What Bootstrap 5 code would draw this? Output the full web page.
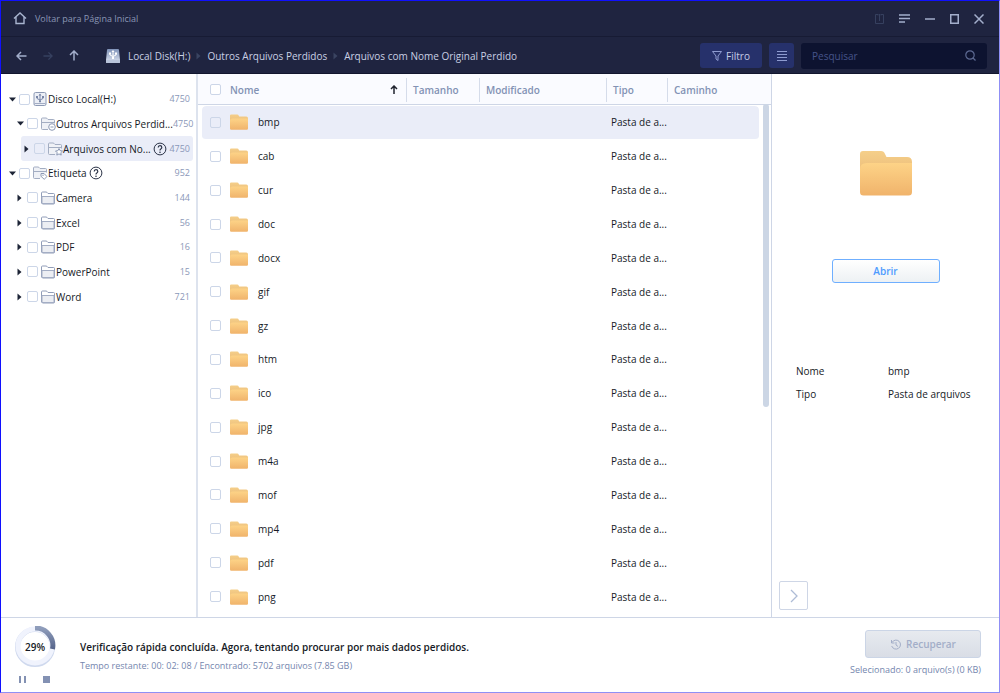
<!DOCTYPE html>
<html lang="pt">
<head>
<meta charset="utf-8">
<meta name="viewport" content="width=device-width, initial-scale=1">
<title>Recuperação de dados</title>
<link href="https://cdn.jsdelivr.net/npm/bootstrap@5.3.0/dist/css/bootstrap.min.css" rel="stylesheet">
<style>
  :root { --navy:#1f2440; --line:#ced6e6; --muted:#8b98b8; --ink:#161a26; --sel:#eaedf8; }
  body { font-family:"Open Sans","Noto Sans",sans-serif; font-size:10px; line-height:16px; color:var(--ink);
    border:1px solid #1010ff; border-right-color:#8f8ff5; border-bottom-color:#8f8ff5; background:#fff; }
  svg { display:block; flex:none; }
  button { line-height:16px; }
  .text-faint { color:var(--muted); }

  /* dark header */
  .titlebar, .toolbar { background:var(--navy); }
  .titlebar { height:36px; padding:0 15px 0 12px; border-bottom:1px solid #171b34; color:#8f9bbb; }
  .titlebar a { color:#8a96b5; font-size:9px; }
  .window-tools { gap:15px; }
  .toolbar { height:37px; padding:1px 12px 0 15px; border-bottom:1px solid #12162e; }
  .plain { background:none; border:0; padding:0; color:#a3aecb; }
  .plain:disabled { color:#36405f; }
  .crumbs { margin-left:23px; }
  .crumbs a { color:#c9d0e4; }
  .crumbs .sep { color:#3a4461; margin:0 6px; }
  .tools { gap:7px; }
  .tool-btn { background:#26316b; border:0; border-radius:3px; height:25px; color:#c6cee6; padding:0; }
  .tool-btn svg { color:#8e9bd0; }
  .filter-btn { width:62px; font-size:10px; }
  .view-btn { width:25px; }
  .search-box { width:186px; height:26px; background:#0d1330; border-radius:3px; padding:0 11px; color:#5d6a92; }
  .search-box input { background:none; border:0; outline:0; width:100%; min-width:0; padding:0; color:#c3cbe0; }
  .search-box input::placeholder { color:#46538a; opacity:1; }

  /* checkboxes */
  .tick { appearance:none; flex:none; width:11px; height:11px; margin:0; border:1px solid #ccd6e8; border-radius:2px; background:#fff; display:block; }
  .picked .tick { background:transparent; }

  /* tree */
  .tree-pane { width:197px; border-right:2px solid #dde3ee; padding:13px 3px 0 7px; }
  .tree { display:grid; grid-template-columns:minmax(0,1fr); grid-auto-rows:1fr; height:222px; }
  .node { border-radius:3px; padding:0 3px 0 1px; }
  .node.picked { background:var(--sel); }
  .node .twist { width:10px; color:#1d2436; }
  .lvl-1 { margin-left:8px; }
  .lvl-2 { margin-left:13px; padding-left:3px; }
  .node .tick { margin-right:3px; }
  .node .count { font-size:9px; }
  .help { color:#2b3347; margin-left:2px; }

  /* file table */
  .list-pane { min-width:0; background:linear-gradient(#fafbff 30px,var(--line) 30px 31px,#fff 31px); border-right:1px solid var(--line); }
  .files { width:100%; height:100%; table-layout:fixed; border-collapse:separate; border-spacing:0; }
  .files th { height:32px; padding:0 0 1px; font-weight:600; color:#8292b4; vertical-align:middle; }
  .files th > div { height:24px; padding-left:6px; }
  .files th + th > div { border-left:1px solid #d5dcea; }
  .files td { padding:0 0 0 5px; vertical-align:middle; border-bottom:1px solid transparent; background-clip:padding-box; white-space:nowrap; }
  .files td:first-child, .files th:first-child { padding-left:8px; }
  .files th:first-child > div { padding-left:0; }
  .files .tick { margin-right:9px; }
  .files label { margin-left:10px; }
  .files .picked td { background-color:var(--sel); }
  .files .picked td:first-child { border-radius:4px 0 0 4px; }
  .files .picked td:last-child { border-radius:0 4px 4px 0; }
  .list-body { min-width:0; padding:0 0 3px 4px; }
  .rail { width:12px; padding:30px 0 0 4px; }
  .thumb { width:6px; background:#ccd6e5; border-radius:3px; }

  /* preview */
  .preview { width:227px; padding:76px 0 7px; }
  .open-btn { width:108px; height:24px; margin-top:63px; padding:0; background:linear-gradient(#fff,#edf1f4); border:1px solid #6fafff; border-radius:3px; color:#4d9bff; font-weight:600; }
  .facts { display:grid; grid-template-columns:92px 1fr; row-gap:7px; margin:80px 0 0 24px; }
  .next-btn { width:29px; height:29px; margin-left:7px; background:#fff; border:1px solid var(--line); border-radius:2px; color:#aebcd6; padding:0; }

  /* status bar */
  .status { height:75px; border-top:1px solid var(--line); padding:0 18px 0 13px; }
  .gauge { width:42px; }
  .gauge strong { font-weight:600; }
  .status-text { margin-left:24px; padding-top:21px; }
  .status-text p { font-weight:600; margin:0 0 3px; }
  .note { font-size:9px; color:#7486ae; }
  .recover { width:116px; height:28px; padding:0; border:1px solid #cbd5e6; border-radius:3px; background:linear-gradient(#e7eaef,#d9dde6); color:#a3aec8; font-weight:600; }
</style>
</head>
<body class="d-flex flex-column min-vh-100">

<!-- shared symbols -->
<svg width="0" height="0" class="position-absolute" aria-hidden="true">
  <defs>
    <linearGradient id="gFront" x1="0" y1="0" x2="0" y2="1"><stop offset="0" stop-color="#fdd387"/><stop offset="1" stop-color="#f0b36b"/></linearGradient>
    <linearGradient id="gBack" x1="0" y1="0" x2="0" y2="1"><stop offset="0" stop-color="#f5cf8a"/><stop offset="1" stop-color="#e9b673"/></linearGradient>
    <linearGradient id="gDisk" x1="0" y1="0" x2="0" y2="1"><stop offset="0" stop-color="#7f92b8"/><stop offset="1" stop-color="#dfe5f1"/></linearGradient>
    <linearGradient id="gArc" x1="0" y1="0" x2="0" y2="1"><stop offset="0" stop-color="#8f9dbb"/><stop offset="1" stop-color="#56648a"/></linearGradient>
    <symbol id="folder" viewBox="0 0 52 46">
      <path fill="url(#gBack)" d="M0 4a3 3 0 0 1 3-3h18q3 0 4 3l1.500 3H47q5 0 5 5v20H0z"/>
      <path fill="url(#gFront)" d="M0 19q0-6 7-6h45v29a3.500 3.500 0 0 1-3.500 3.500h-45A3.500 3.500 0 0 1 0 42z"/>
    </symbol>
    <symbol id="dir" viewBox="0 0 15 14">
      <path fill="#fff" stroke="#919db8" d="M.5 12V2q0-1 1-1h3.500q1 0 1.500 1l.5.500h5.500q1 0 1 1V12q0 1-1 1h-10.500q-1 0-1-1z"/>
      <path fill="#eceef3" stroke="#a3adc4" d="M1 12.500v-7h12v7z"/>
    </symbol>
    <symbol id="dirBadge" viewBox="0 0 15 14">
      <path fill="#eff1f6" stroke="#a3adc2" d="M7 12.500H1.500q-1 0-1-1V2q0-1 1-1H5q1 0 1.500 1l.5.500h5.500q1 0 1 1v3M1 5.500h12"/>
    </symbol>
    <symbol id="fork" viewBox="0 0 9 9">
      <path d="M4.500 1v7M1.500 3.500v1.500l3 1.500 3-1.500V3.500" fill="none" stroke="currentColor"/>
      <path d="M3 2 4.500 0 6 2zM.5 2.500h2v2h-2zM6.500 2.500h2v2h-2zM3.500 7h2v2h-2z" fill="currentColor"/>
    </symbol>
    <symbol id="drive" viewBox="0 0 14 14">
      <rect x=".5" y=".5" width="12" height="13" rx="1.500" fill="#eceff6" stroke="#8c99b4"/>
      <path d="M1 11.500h11" stroke="#a3adc4"/>
      <use href="#fork" x="2" y="1.500" width="9" height="9" color="#7886a8"/>
    </symbol>
    <symbol id="down" viewBox="0 0 7 5"><path fill="currentColor" d="M0 .5h7L3.500 4.500z"/></symbol>
    <symbol id="right" viewBox="0 0 5 8"><path fill="currentColor" d="M.5.500v7L4.500 4z"/></symbol>
    <symbol id="help" viewBox="0 0 14 14">
      <circle cx="7" cy="7" r="5.900" fill="none" stroke="currentColor"/>
      <path d="M5.200 5.600q0-1.900 1.800-1.900t1.800 1.700q0 .9-1 1.500T7 8.500" fill="none" stroke="currentColor" stroke-width="1.200"/><circle cx="7" cy="10.200" r=".8" fill="currentColor"/>
    </symbol>
  </defs>
</svg>

<header>
  <div class="titlebar d-flex align-items-center">
    <a href="#" class="d-flex align-items-center text-decoration-none me-auto">
      <svg class="me-2" width="14" height="13" viewBox="0 0 14 13" fill="none" stroke="#a9b5d0" stroke-width="1.400"><path d="M1 6.500 7 1l6 5.500M3 5v6.500h8V5"/></svg>
      Voltar para Página Inicial</a>
    <div class="window-tools d-flex align-items-center">
      <button class="plain" disabled aria-label="Exportar"><svg width="9" height="11" viewBox="0 0 9 11" fill="none" stroke="currentColor"><path d="M3 1.500H.5v9h8v-9H6M4.500 8V1M3 2.500 4.500 1 6 2.500"/></svg></button>
      <button class="plain" aria-label="Menu"><svg width="11" height="9" viewBox="0 0 11 9" stroke="currentColor" stroke-width="1.500"><path d="M0 1h11M0 4.500h11M0 8h6"/></svg></button>
      <button class="plain" aria-label="Minimizar"><svg width="10" height="10" viewBox="0 0 10 10" stroke="currentColor" stroke-width="1.500"><path d="M0 5h10"/></svg></button>
      <button class="plain" aria-label="Maximizar"><svg width="9" height="10" viewBox="0 0 9 10" fill="none" stroke="currentColor" stroke-width="1.500"><path d="M.75.750h7.500v8.500H.75z"/></svg></button>
      <button class="plain" aria-label="Fechar"><svg width="10" height="10" viewBox="0 0 10 10" stroke="currentColor" stroke-width="1.500"><path d="m.5.500 9 9M9.500.500l-9 9"/></svg></button>
    </div>
  </div>
  <div class="toolbar d-flex align-items-center">
    <div class="d-flex align-items-center gap-3">
      <button class="plain" aria-label="Voltar"><svg width="11" height="10" viewBox="0 0 11 10" fill="none" stroke="currentColor" stroke-width="1.500"><path d="M10.500 5H1M5 1 1 5l4 4"/></svg></button>
      <button class="plain" disabled aria-label="Avançar"><svg width="10" height="10" viewBox="0 0 11 10" fill="none" stroke="currentColor" stroke-width="1.500"><path d="M.5 5H10M6 1l4 4-4 4"/></svg></button>
      <button class="plain" aria-label="Acima"><svg width="10" height="11" viewBox="0 0 10 11" fill="none" stroke="currentColor" stroke-width="1.500"><path d="M5 10.500V1M1 5l4-4 4 4"/></svg></button>
    </div>
    <nav class="crumbs d-flex align-items-center me-auto text-nowrap" aria-label="Local">
      <a href="#" class="d-flex align-items-center text-decoration-none ps-1"><svg class="me-2" width="14" height="14" viewBox="0 0 14 14"><path fill="url(#gDisk)" d="M2 0h10q1 0 1 1l1 10v2q0 1-1 1H1q-1 0-1-1v-2L1 1q0-1 1-1z"/><path fill="#b9c4da" d="M0 11h14v2q0 1-1 1H1q-1 0-1-1z"/><use href="#fork" x="2.500" y="1" width="9" height="9" color="#fff"/></svg><span>Local Disk(H:)</span></a>
      <svg class="sep" width="5" height="8"><use href="#right"/></svg>
      <a href="#" class="text-decoration-none">Outros Arquivos Perdidos</a>
      <svg class="sep" width="5" height="8"><use href="#right"/></svg>
      <a href="#" class="text-decoration-none">Arquivos com Nome Original Perdido</a>
    </nav>
    <div class="tools d-flex align-items-center">
      <button class="tool-btn filter-btn d-flex align-items-center justify-content-center gap-1"><svg width="10" height="10" viewBox="0 0 10 10" fill="none" stroke="currentColor"><path d="M.5.500h9L6 5v4.500L4 8V5z"/></svg><span>Filtro</span></button>
      <button class="tool-btn view-btn d-flex align-items-center justify-content-center" aria-label="Lista"><svg width="10" height="10" viewBox="0 0 10 10" stroke="currentColor"><path d="M0 .5h10M0 3.500h10M0 6.500h10M0 9.500h10"/></svg></button>
      <div class="search-box d-flex align-items-center gap-2">
        <input type="text" placeholder="Pesquisar" aria-label="Pesquisar">
        <svg width="11" height="11" viewBox="0 0 11 11" fill="none" stroke="currentColor" stroke-width="1.200"><circle cx="5" cy="5" r="4.200"/><path d="m8 8 2.500 2.500"/></svg>
      </div>
    </div>
  </div>
</header>

<main class="d-flex flex-grow-1">
  <aside class="tree-pane flex-shrink-0">
    <div class="tree" id="tree"></div>
  </aside>

  <section class="list-pane d-flex flex-grow-1">
    <div class="list-body flex-grow-1">
      <table class="files">
        <colgroup><col style="width:204px"><col style="width:73px"><col style="width:127px"><col style="width:61px"><col></colgroup>
        <thead><tr>
          <th><div class="d-flex align-items-center"><input class="tick" type="checkbox" aria-label="Selecionar tudo"><span class="me-auto">Nome</span><svg class="me-2" width="8" height="9" viewBox="0 0 8 9" fill="none" stroke="#20242f" stroke-width="1.500"><path d="M4 9V1M1 4l3-3 3 3"/></svg></div></th>
          <th><div class="d-flex align-items-center">Tamanho</div></th>
          <th><div class="d-flex align-items-center">Modificado</div></th>
          <th><div class="d-flex align-items-center">Tipo</div></th>
          <th><div class="d-flex align-items-center">Caminho</div></th>
        </tr></thead>
        <tbody id="rows"></tbody>
      </table>
    </div>
    <div class="rail flex-shrink-0"><div class="thumb" style="height:59%"></div></div>
  </section>

  <aside class="preview flex-shrink-0 d-flex flex-column">
    <svg class="align-self-center" width="52" height="46"><use href="#folder"/></svg>
    <button class="open-btn align-self-center">Abrir</button>
    <div class="facts"><span>Nome</span><span>bmp</span><span>Tipo</span><span>Pasta de arquivos</span></div>
    <button class="next-btn mt-auto d-flex align-items-center justify-content-center" aria-label="Ocultar painel"><svg width="8" height="14" viewBox="0 0 8 14" fill="none" stroke="currentColor" stroke-width="1.300"><path d="m1 1 6 6-6 6"/></svg></button>
  </aside>
</main>

<footer class="status d-flex">
  <div class="gauge d-flex flex-column align-items-center pt-2">
    <div class="position-relative">
      <svg width="42" height="42" viewBox="0 0 42 42" fill="none">
        <circle cx="21" cy="21" r="17.500" stroke="#cfd9ee" stroke-width="5"/>
        <circle cx="21" cy="20" r="17" stroke="#f0f3fd" stroke-width="5"/>
        <path d="M21 2a17.500 17.500 0 0 1 17.500 21" stroke="url(#gArc)" stroke-width="5"/>
      </svg>
      <strong class="position-absolute top-50 start-50 translate-middle">29%</strong>
    </div>
    <div class="d-flex gap-3 mt-2">
      <button class="plain text-faint" aria-label="Pausar"><svg width="8" height="7" fill="#8391b3"><path d="M0 0h2v7H0zM5 0h2v7H5z"/></svg></button>
      <button class="plain text-faint" aria-label="Parar"><svg width="8" height="7" fill="#8391b3"><path d="M0 0h7v7H0z"/></svg></button>
    </div>
  </div>
  <div class="status-text me-auto">
    <p>Verificação rápida concluída. Agora, tentando procurar por mais dados perdidos.</p>
    <div class="note">Tempo restante: 00: 02: 08 / Encontrado: 5702 arquivos (7.85 GB)</div>
  </div>
  <div class="d-flex flex-column align-items-end pt-2">
    <button class="recover d-flex align-items-center justify-content-center gap-1 mt-1" disabled>
      <svg width="12" height="11" viewBox="0 0 12 11" fill="none" stroke="currentColor"><path d="M2 3.500a4.500 4.500 0 1 1-.3 3.500M1.500 1v3h3M6 3v3l2 1.500"/></svg>Recuperar</button>
    <div class="note mt-1">Selecionado: 0 arquivo(s) (0 KB)</div>
  </div>
</footer>

<script src="https://cdn.jsdelivr.net/npm/bootstrap@5.3.0/dist/js/bootstrap.bundle.min.js"></script>
<script>
  const badges = {
    minus: '<circle cx="11" cy="10" r="3.300" fill="#fff" stroke="#8c99b4"/><path d="M9.500 10h3" stroke="#8c99b4"/>',
    star: '<path d="m11 6.500 1.100 2.200 2.400.3-1.700 1.700.4 2.400-2.200-1.200-2.200 1.200.4-2.400L7.500 9l2.400-.3z" fill="#fff" stroke="#8c99b4"/>',
    tag: '<path d="M8 7.500h3l3 3-2.800 2.800L8 10.300z" fill="#fff" stroke="#8c99b4"/><circle cx="10" cy="9.300" r=".7" fill="#8c99b4"/>'
  };
  const nodes = [
    [0, 1, 'Disco Local(H:)', 4750, 'drive'],
    [1, 1, 'Outros Arquivos Perdid...', 4750, 'minus'],
    [2, 0, 'Arquivos com No...', 4750, 'star', 1],
    [0, 1, 'Etiqueta', 952, 'tag', 1],
    [1, 0, 'Camera', 144], [1, 0, 'Excel', 56], [1, 0, 'PDF', 16], [1, 0, 'PowerPoint', 15], [1, 0, 'Word', 721]
  ];
  document.getElementById('tree').innerHTML = nodes.map(([lvl, open, name, count, kind, help], i) => {
    const icon = kind === 'drive' ? '<use href="#drive"/>' : kind ? '<use href="#dirBadge"/>' + badges[kind] : '<use href="#dir"/>';
    return `<div class="node d-flex align-items-center text-nowrap lvl-${lvl} ${lvl === 2 ? 'picked' : ''}">
      <span class="twist flex-shrink-0"><svg width="${open ? 7 : 5}" height="${open ? 5 : 8}"><use href="#${open ? 'down' : 'right'}"/></svg></span>
      <input class="tick" type="checkbox" id="n${i}">
      <svg width="15" height="14" viewBox="0 0 15 14" fill="none">${icon}</svg>
      <label for="n${i}">${name}</label>
      ${help ? '<svg class="help" width="14" height="14"><use href="#help"/></svg>' : ''}
      <span class="count text-faint ms-auto">${count}</span></div>`;
  }).join('');

  const names = ['bmp','cab','cur','doc','docx','gif','gz','htm','ico','jpg','m4a','mof','mp4','pdf','png'];
  document.getElementById('rows').innerHTML = names.map((n, i) => `<tr class="${i ? '' : 'picked'}">
    <td><div class="d-flex align-items-center"><input class="tick" type="checkbox" id="f${i}"><svg width="18" height="16"><use href="#folder"/></svg><label for="f${i}">${n}</label></div></td>
    <td></td><td></td><td>Pasta de a...</td><td></td></tr>`).join('');
</script>
</body>
</html>
